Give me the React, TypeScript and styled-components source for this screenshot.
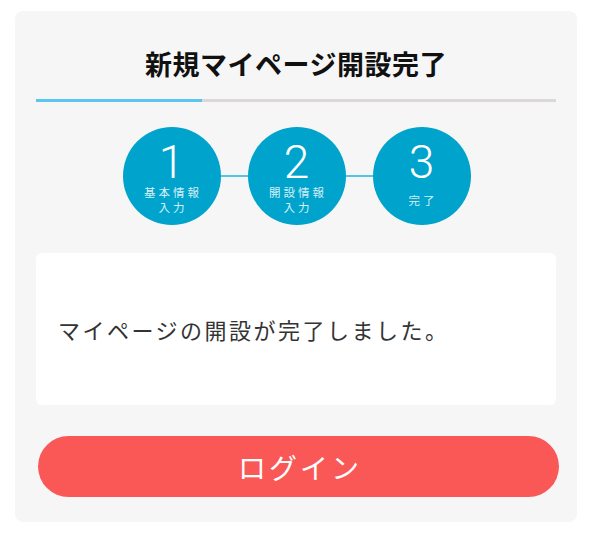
import React from "react";
import styled, { createGlobalStyle } from "styled-components";

const Global = createGlobalStyle`
  html, body { margin: 0; padding: 0; background: #ffffff; }
  body { font-family: "Noto Sans CJK JP", "Noto Sans", sans-serif; }
  * { box-sizing: border-box; }
`;

const Card = styled.div`
  width: 562px;
  height: 511px;
  margin: 11px 0 0 15px;
  padding: 33px 21px 24px;
  background: #f6f6f6;
  border-radius: 8px;
  display: flex;
  flex-direction: column;
`;

const Title = styled.h1`
  margin: 0;
  height: 40px;
  line-height: 40px;
  text-align: center;
  font-family: "Noto Sans CJK JP", sans-serif;
  font-weight: 700;
  font-size: 27px;
  letter-spacing: 0.5px;
  color: #111;
`;

const Progress = styled.div`
  margin-top: 15px;
  height: 3px;
  background: #ddd8d8;
  display: flex;
`;

const ProgressFill = styled.div`
  height: 100%;
  background: #5bc6ef;
`;

const Steps = styled.div`
  margin-top: 25px;
  display: flex;
  justify-content: center;
  align-items: center;
  padding-left: 1px;
`;

const Circle = styled.div`
  width: 98px;
  height: 98px;
  border-radius: 50%;
  background: #00a3cb;
  color: #fff;
  display: flex;
  flex-direction: column;
  align-items: center;
  padding-top: 16px;
`;

const Num = styled.div`
  font-family: "Roboto", "Noto Sans", sans-serif;
  font-weight: 300;
  font-size: 46px;
  line-height: 38px;
  height: 38px;
`;

const Label = styled.div`
  margin-top: 4px;
  height: 30px;
  display: flex;
  align-items: center;
  justify-content: center;
  text-align: center;
  font-size: 11.5px;
  line-height: 15px;
  letter-spacing: 3px;
  padding-left: 3px;
  color: #d6eff7;
`;

const Connector = styled.div`
  width: 27px;
  height: 2px;
  background: #55c3ea;
`;

const MessageBox = styled.div`
  margin-top: 28px;
  height: 152px;
  background: #fff;
  border-radius: 6px;
  display: flex;
  align-items: center;
  padding-left: 22px;
`;

const Message = styled.p`
  margin: 0;
  font-size: 22px;
  letter-spacing: 2.5px;
  color: #333;
  font-weight: 400;
`;

const LoginButton = styled.button`
  margin: 31px 0 0 2px;
  width: 521px;
  height: 61px;
  border: none;
  border-radius: 31px;
  background: #fa5757;
  color: #fff;
  font-family: "Noto Sans CJK JP", sans-serif;
  font-size: 28px;
  letter-spacing: 3px;
  padding: 0 0 0 3px;
  cursor: pointer;
`;

const steps = [
  { n: "1", label: ["基本情報", "入力"] },
  { n: "2", label: ["開設情報", "入力"] },
  { n: "3", label: ["完了"] },
];

export default function App() {
  return (
    <>
      <Global />
      <Card>
        <Title>新規マイページ開設完了</Title>
        <Progress>
          <ProgressFill style={{ width: "32%" }} />
        </Progress>
        <Steps>
          {steps.map((s, i) => (
            <React.Fragment key={s.n}>
              {i > 0 && <Connector />}
              <Circle>
                <Num>{s.n}</Num>
                <Label>
                  {s.label.map((l, j) => (
                    <React.Fragment key={j}>
                      {j > 0 && <br />}
                      {l}
                    </React.Fragment>
                  ))}
                </Label>
              </Circle>
            </React.Fragment>
          ))}
        </Steps>
        <MessageBox>
          <Message>マイページの開設が完了しました。</Message>
        </MessageBox>
        <LoginButton>ログイン</LoginButton>
      </Card>
    </>
  );
}
